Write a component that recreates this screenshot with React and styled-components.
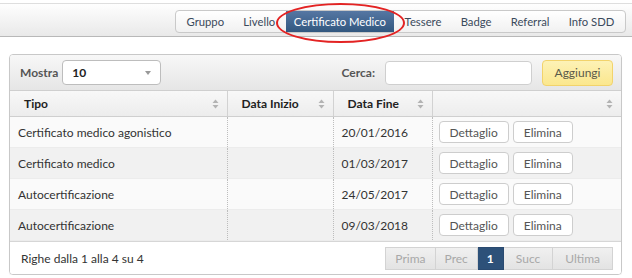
import React from 'react';
import styled, { createGlobalStyle } from 'styled-components';

const Global = createGlobalStyle`
  body {
    margin: 0;
    background: #fff;
    font-family: Lato, "Open Sans", sans-serif;
    font-size: 12px;
    color: #333;
  }
`;

const TopBar = styled.div`
  margin-top: 3px;
  height: 34px;
  border-top: 1px solid #dedede;
  border-bottom: 1px solid #b8b8b8;
  background: linear-gradient(#fefefe, #e9e9e9);
  display: flex;
  justify-content: flex-end;
  align-items: flex-end;
  padding: 0 6px 3px 0;
  box-sizing: border-box;
`;

const TabGroup = styled.div`
  display: flex;
  height: 23px;
  border: 1px solid #c9c9c9;
  border-radius: 4px;
  background: linear-gradient(#ffffff, #f1f1f1);
  box-sizing: border-box;
  padding: 0 1px;
`;

const Tab = styled.div`
  position: relative;
  display: flex;
  align-items: center;
  padding: 0 ${p => (p.$active ? '8px' : '9.6px')};
  margin: ${p => (p.$active ? '0 1px' : '0')};
  color: ${p => (p.$active ? '#fff' : '#3b4a5c')};
  background: ${p => (p.$active ? 'linear-gradient(#5577a3, #32577f)' : 'transparent')};
  font-size: 11.3px;
`;

const Ring = styled.div`
  position: absolute;
  left: -10px;
  top: -8px;
  width: calc(100% + 21px);
  height: 40px;
  border: 2px solid #e32323;
  border-radius: 50%;
  box-sizing: border-box;
  pointer-events: none;
  z-index: 2;
`;

const Panel = styled.div`
  margin: 17px 10px 0 9px;
  border: 1px solid #c8c8c8;
  border-radius: 4px;
  overflow: hidden;
  box-shadow: 0 1px 1px rgba(0, 0, 0, 0.06);
`;

const Toolbar = styled.div`
  height: 35px;
  display: flex;
  align-items: center;
  padding: 0 8px 0 10px;
  background: linear-gradient(#f7f7f7, #e6e6e6);
  border-bottom: 1px solid #cfcfcf;
`;

const Label = styled.span`
  font-weight: bold;
  color: #555;
  margin-right: ${p => p.$gap || 4}px;
`;

const Select = styled.div`
  width: 99px;
  height: 25px;
  box-sizing: border-box;
  border: 1px solid #bdbdbd;
  border-radius: 4px;
  background: #fff;
  display: flex;
  align-items: center;
  justify-content: space-between;
  padding: 0 9px 0 9px;
  font-weight: bold;
  color: #222;
`;

const Caret = styled.span`
  width: 0;
  height: 0;
  border-left: 3px solid transparent;
  border-right: 3px solid transparent;
  border-top: 4px solid #999;
`;

const Spacer = styled.div`
  flex: 1;
`;

const SearchInput = styled.div`
  width: 147px;
  height: 24px;
  box-sizing: border-box;
  border: 1px solid #cfcfcf;
  border-radius: 4px;
  background: #fff;
  margin-right: 10px;
`;

const AddButton = styled.div`
  width: 71px;
  height: 26px;
  box-sizing: border-box;
  border: 1px solid #f2d36b;
  border-radius: 4px;
  background: linear-gradient(#fdf2b6, #fbe78e);
  display: flex;
  align-items: center;
  justify-content: center;
  color: #5a5a4a;
`;

const Table = styled.table`
  width: 100%;
  border-collapse: collapse;
  table-layout: fixed;
`;

const Col = styled.col`
  width: ${p => p.$w}px;
`;

const Th = styled.th`
  height: 25px;
  padding: 0 8px 0 14px;
  text-align: left;
  font-weight: bold;
  color: #222;
  background: linear-gradient(#f8f8f8, #ececec);
  border-right: 1px solid #d2d2d2;
  border-bottom: 1px solid #cfcfcf;
  &:last-child {
    border-right: none;
  }
`;

const ThInner = styled.div`
  display: flex;
  align-items: center;
  justify-content: space-between;
`;

const Row = styled.tr`
  background: ${p => (p.$odd ? '#f1f1f1' : '#fafafa')};
`;

const Td = styled.td`
  height: 31px;
  padding: 0 8px;
  box-sizing: border-box;
  border-right: 1px dotted #bdbdbd;
  border-bottom: 1px solid #ececec;
  color: #333;
  white-space: nowrap;
  &:last-child {
    border-right: none;
    padding-left: 6px;
  }
`;

const Actions = styled.div`
  display: flex;
  gap: 4px;
`;

const Btn = styled.div`
  height: 22px;
  box-sizing: border-box;
  padding: 0 10px;
  border: 1px solid #cdcdcd;
  border-radius: 4px;
  background: #fff;
  display: flex;
  align-items: center;
  color: #555;
`;

const Footer = styled.div`
  height: 32px;
  display: flex;
  align-items: center;
  justify-content: space-between;
  padding: 0 8px 0 11px;
  background: #fff;
  border-top: 1px solid #d6d6d6;
`;

const Pager = styled.div`
  display: flex;
`;

const PageBtn = styled.div`
  height: 23px;
  box-sizing: border-box;
  padding: 0 ${p => p.$pad || 10}px;
  display: flex;
  align-items: center;
  border: 1px solid ${p => (p.$active ? '#2a4a70' : '#d3d3d3')};
  border-left: ${p => (p.$first ? '' : 'none')};
  background: ${p => (p.$active ? '#2d5179' : 'linear-gradient(#f0f0f0, #e3e3e3)')};
  color: ${p => (p.$active ? '#fff' : '#a8a8a8')};
  font-weight: ${p => (p.$active ? 'bold' : 'normal')};
`;

const SortIcon = () => (
  <svg width="7" height="10" viewBox="0 0 7 10">
    <path d="M3.5 0.5 L6.5 4 H0.5 Z" fill="#b3b3b3" />
    <path d="M3.5 9.5 L6.5 6 H0.5 Z" fill="#b3b3b3" />
  </svg>
);

const tabs = ['Gruppo', 'Livello', 'Certificato Medico', 'Tessere', 'Badge', 'Referral', 'Info SDD'];

const rows = [
  ['Certificato medico agonistico', '', '20/01/2016'],
  ['Certificato medico', '', '01/03/2017'],
  ['Autocertificazione', '', '24/05/2017'],
  ['Autocertificazione', '', '09/03/2018'],
];

const cols = [
  ['Tipo', 217],
  ['Data Inizio', 106],
  ['Data Fine', 99],
  ['', 189],
];

export default function App() {
  return (
    <>
      <Global />
      <TopBar>
        <TabGroup>
          {tabs.map(t => (
            <Tab key={t} $active={t === 'Certificato Medico'}>
              {t}
              {t === 'Certificato Medico' && <Ring />}
            </Tab>
          ))}
        </TabGroup>
      </TopBar>
      <Panel>
        <Toolbar>
          <Label>Mostra</Label>
          <Select>
            10
            <Caret />
          </Select>
          <Spacer />
          <Label $gap={10}>Cerca:</Label>
          <SearchInput />
          <AddButton>Aggiungi</AddButton>
        </Toolbar>
        <Table>
          <colgroup>
            {cols.map(([c, w], i) => (
              <Col key={i} $w={w} />
            ))}
          </colgroup>
          <thead>
            <tr>
              {cols.map(([c], i) => (
                <Th key={i}>
                  <ThInner>
                    <span>{c}</span>
                    <SortIcon />
                  </ThInner>
                </Th>
              ))}
            </tr>
          </thead>
          <tbody>
            {rows.map((r, i) => (
              <Row key={i} $odd={i % 2 === 1}>
                <Td>{r[0]}</Td>
                <Td>{r[1]}</Td>
                <Td>{r[2]}</Td>
                <Td>
                  <Actions>
                    <Btn>Dettaglio</Btn>
                    <Btn>Elimina</Btn>
                  </Actions>
                </Td>
              </Row>
            ))}
          </tbody>
        </Table>
        <Footer>
          <span>Righe dalla 1 alla 4 su 4</span>
          <Pager>
            <PageBtn $first $pad={9}>Prima</PageBtn>
            <PageBtn $pad={9}>Prec</PageBtn>
            <PageBtn $active $pad={9}>1</PageBtn>
            <PageBtn $pad={12}>Succ</PageBtn>
            <PageBtn $pad={12}>Ultima</PageBtn>
          </Pager>
        </Footer>
      </Panel>
    </>
  );
}
